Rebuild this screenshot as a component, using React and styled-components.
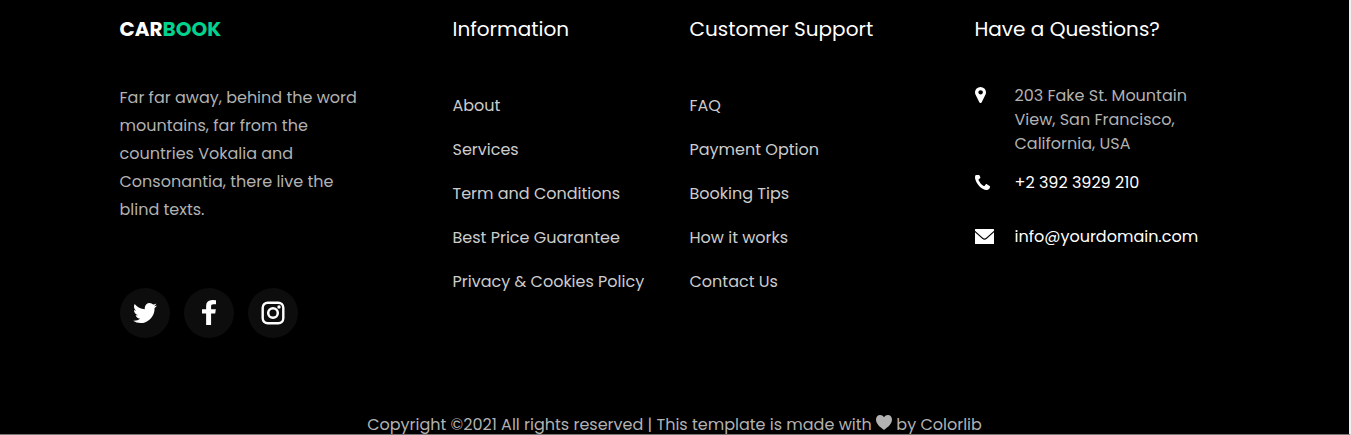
import React from "react";
import styled, { createGlobalStyle } from "styled-components";

const GlobalStyle = createGlobalStyle`
  *, *::before, *::after { box-sizing: border-box; }
  body {
    margin: 0;
    background: #000;
    font-family: Poppins, Inter, "Open Sans", sans-serif;
    font-size: 16px;
    line-height: 28px;
    color: #b2b2b2;
  }
  a { color: inherit; text-decoration: none; }
  ul, p, h2 { margin: 0; padding: 0; font-weight: 400; }
  ul { list-style: none; }
`;

const Footer = styled.footer`
  background: #000;
  padding-top: 14px;
  border-right: 2px solid #f1f1f1;
  border-bottom: 1px solid #7a7577;
`;

const Container = styled.div`
  max-width: 1140px;
  margin: 0 auto;
  padding: 0 15px;
`;

const Columns = styled.div`
  display: grid;
  grid-template-columns: repeat(4, minmax(0, 1fr));
  column-gap: 30px;

  @media (max-width: 900px) {
    grid-template-columns: repeat(2, minmax(0, 1fr));
    row-gap: 40px;
  }
`;

const Column = styled.section`
  padding-left: ${({ $indent }) => ($indent ? "48px" : "0")};
`;

const Heading = styled.h2`
  margin-bottom: 40px;
  font-size: 20px;
  line-height: 30px;
  color: #fff;
  white-space: nowrap;
`;

const Logo = styled.a`
  font-weight: 700;
  color: #fff;
`;

const LogoAccent = styled.span`
  color: #01d28e;
`;

const SocialList = styled.ul`
  display: flex;
  gap: 14px;
  margin-top: 64px;
`;

const SocialLink = styled.a`
  display: flex;
  align-items: center;
  justify-content: center;
  width: 50px;
  height: 50px;
  border-radius: 50%;
  background: #0d0d0d;
  color: #fff;
`;

const NavLink = styled.a`
  display: block;
  line-height: 44px;
  color: #ccc;
  white-space: nowrap;
`;

const ContactRow = styled.li`
  display: grid;
  grid-template-columns: 40px 1fr;
  margin-bottom: ${({ $gap }) => $gap};
  line-height: 24px;
  color: ${({ $bright }) => ($bright ? "#fff" : "#b2b2b2")};
`;

const IconCell = styled.span`
  display: flex;
  align-items: center;
  height: 22px;
  color: #fff;
`;

const Copyright = styled.p`
  margin-top: 77px;
  line-height: 18px;
  text-align: center;
`;

const Glyph = styled.svg`
  display: block;
  fill: currentColor;
`;

const Heart = styled(Glyph)`
  display: inline-block;
  vertical-align: baseline;
`;

const paths = {
  marker:
    "M1120 640q0-86-62-147t-150-61-150 61-62 147 62 147 150 61 150-61 62-147zm288 0q0 109-33 179l-364 774q-16 33-47.5 52t-67.5 19-67.5-19-46.5-52l-365-774q-33-70-33-179 0-212 150-362t362-150 362 150 150 362z",
  phone:
    "M1600 1240q0 27-10 70.5t-21 68.5q-21 50-122 106-94 51-186 51-27 0-53-3.5t-57.5-12.5-47-14.5-55.5-20.5-49-18q-98-35-175-83-127-79-264-216t-216-264q-48-77-83-175-3-9-18-49t-20.5-55.5-14.5-47-12.5-57.5-3.5-53q0-92 51-186 56-101 106-122 25-11 68.5-21t70.5-10q14 0 21 3 18 6 53 76 11 19 30 54t35 63.5 31 53.5q3 4 17.5 25t21.5 35.5 7 28.5q0 20-28.5 50t-62 55-62 53-28.5 46q0 9 5 22.5t8.5 20.5 14 24 11.5 19q76 137 174 235t235 174q2 1 19 11.5t24 14 20.5 8.5 22.5 5q18 0 46-28.5t53-62 55-62 50-28.5q14 0 28.5 7t35.5 21.5 25 17.5q25 15 53.5 31t63.5 35 54 30q70 35 76 53 3 7 3 21z",
  envelope:
    "M0 3.200L7.200 9.800Q9.500 11.700 11.800 9.800L19 3.200V14.500Q19 15 18.500 15H.5Q0 15 0 14.500ZM.5 0H18.500Q19 0 19 .5V1.800L11.200 8.800Q9.500 10.200 7.800 8.800L0 1.800V.5Q0 0 .5 0Z",
  twitter:
    "M1684 408q-67 98-162 167 1 14 1 42 0 130-38 259.5t-115.5 248.5-184.5 210.5-258 146-323 54.5q-271 0-496-145 35 4 78 4 225 0 401-138-105-2-188-64.5t-114-159.5q33 5 61 5 43 0 85-11-112-23-185.5-111.5t-73.5-205.5v-4q68 38 146 41-66-44-105-115t-39-154q0-88 44-163 121 149 294.5 238.5t371.5 99.5q-8-38-8-74 0-134 94.5-228.5t228.5-94.5q140 0 236 102 109-21 205-78-37 115-142 178 93-10 186-50z",
  facebook:
    "M1343 12v264h-157q-86 0-116 36t-30 108v189h293l-39 296h-254v759h-306v-759h-255v-296h255v-218q0-186 104-288.5t277-102.5q147 0 228 12z",
  heart:
    "M8 2.200C9 .8 10.300 0 11.900 0C14.300 0 16 1.900 16 4.500C16 8.800 12.300 11.800 8 15C3.700 11.800 0 8.800 0 4.500C0 1.900 1.700 0 4.100 0C5.700 0 7 .8 8 2.200Z",
};

const icons = {
  marker: { box: "384 128 1024 1536", width: 11, height: 16 },
  phone: { box: "192 256 1408 1280", width: 15, height: 15 },
  envelope: { box: "0 0 19 15", width: 19, height: 15 },
  twitter: { box: "108 256 1576 1280", width: 24, height: 20 },
  facebook: { box: "479 0 864 1732", width: 14, height: 26 },
};

const Icon = ({ name }) => {
  const { box, width, height } = icons[name];
  return (
    <Glyph viewBox={box} width={width} height={height} preserveAspectRatio="none" aria-hidden="true">
      <path d={paths[name]} />
    </Glyph>
  );
};

const InstagramIcon = () => (
  <Glyph viewBox="0 0 24 24" width="24" height="24" aria-hidden="true">
    <rect x="1.700" y="1.700" width="20.600" height="20.600" rx="5" fill="none" stroke="currentColor" strokeWidth="2.400" />
    <circle cx="12" cy="12" r="4.800" fill="none" stroke="currentColor" strokeWidth="2.500" />
    <circle cx="18" cy="6" r="1.700" />
  </Glyph>
);

const information = ["About", "Services", "Term and Conditions", "Best Price Guarantee", "Privacy & Cookies Policy"];
const support = ["FAQ", "Payment Option", "Booking Tips", "How it works", "Contact Us"];

const LinkColumn = ({ title, links, indent }) => (
  <Column $indent={indent}>
    <Heading>{title}</Heading>
    <ul>
      {links.map((label) => (
        <li key={label}>
          <NavLink href="#">{label}</NavLink>
        </li>
      ))}
    </ul>
  </Column>
);

export default function App() {
  return (
    <>
      <GlobalStyle />
      <Footer>
        <Container>
          <Columns>
            <Column>
              <Heading>
                <Logo href="#">
                  CAR<LogoAccent>BOOK</LogoAccent>
                </Logo>
              </Heading>
              <p>
                Far far away, behind the word mountains, far from the countries Vokalia and
                Consonantia, there live the blind texts.
              </p>
              <SocialList>
                <li><SocialLink href="#" aria-label="Twitter"><Icon name="twitter" /></SocialLink></li>
                <li><SocialLink href="#" aria-label="Facebook"><Icon name="facebook" /></SocialLink></li>
                <li><SocialLink href="#" aria-label="Instagram"><InstagramIcon /></SocialLink></li>
              </SocialList>
            </Column>
            <LinkColumn title="Information" links={information} indent />
            <LinkColumn title="Customer Support" links={support} />
            <Column>
              <Heading>Have a Questions?</Heading>
              <ul>
                <ContactRow $gap="15px">
                  <IconCell><Icon name="marker" /></IconCell>
                  <span>203 Fake St. Mountain View, San Francisco, California, USA</span>
                </ContactRow>
                <ContactRow $gap="30px" $bright>
                  <IconCell><Icon name="phone" /></IconCell>
                  <a href="tel:+23923929210">+2 392 3929 210</a>
                </ContactRow>
                <ContactRow $gap="0" $bright>
                  <IconCell><Icon name="envelope" /></IconCell>
                  <a href="mailto:info@yourdomain.com">info@yourdomain.com</a>
                </ContactRow>
              </ul>
            </Column>
          </Columns>
          <Copyright>
            Copyright ©2021 All rights reserved | This template is made with{" "}
            <Heart viewBox="0 0 16 15" width="16" height="15" role="img" aria-label="love">
              <path d={paths.heart} />
            </Heart>{" "}
            by <a href="#">Colorlib</a>
          </Copyright>
        </Container>
      </Footer>
    </>
  );
}
